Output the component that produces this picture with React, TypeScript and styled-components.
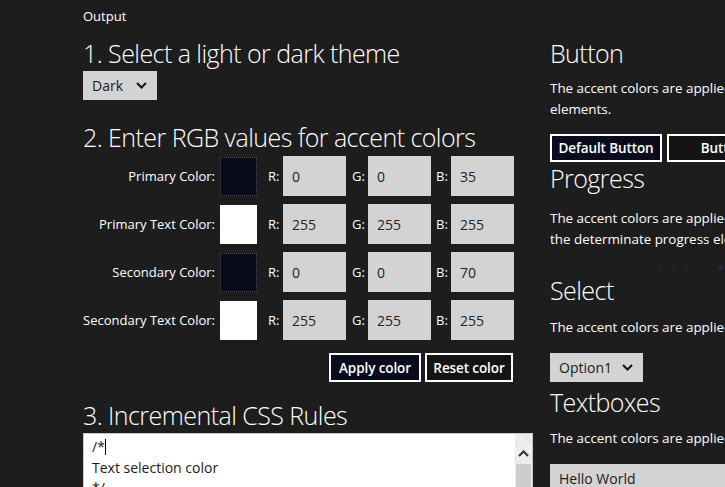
import React from "react";
import styled, { createGlobalStyle } from "styled-components";

const GlobalStyle = createGlobalStyle`
  html, body { margin: 0; padding: 0; background: #1d1d1d; overflow: hidden; }
  body { font-family: "Open Sans", "Noto Sans", sans-serif; color: #fff; }
  * { box-sizing: border-box; }
`;

const Page = styled.div`
  width: 725px;
  height: 487px;
  overflow: hidden;
  padding-left: 83px;
`;

const OutputLabel = styled.div`
  font-size: 13px;
  line-height: 18px;
  padding-top: 7px;
  height: 38px;
`;

const Columns = styled.div`
  display: flex;
  gap: 17px;
  align-items: flex-start;
`;

const LeftCol = styled.div`
  width: 450px;
  flex: none;
  display: flex;
  flex-direction: column;
`;

const RightCol = styled.div`
  width: 520px;
  flex: none;
  display: flex;
  flex-direction: column;
`;

const H2 = styled.h2<{ $mt?: number }>`
  margin: ${(p) => p.$mt ?? 0}px 0 0 0;
  font-weight: 300;
  font-size: 25px;
  line-height: 30px;
  height: 30px;
  letter-spacing: -0.55px;
  white-space: nowrap;
  flex: none;
`;

const Para = styled.p<{ $mt?: number }>`
  margin: ${(p) => p.$mt ?? 0}px 0 0 0;
  font-size: 13.4px;
  line-height: 21px;
  white-space: nowrap;
  flex: none;
`;

const SelectBox = styled.div<{ $w: number; $mt?: number }>`
  width: ${(p) => p.$w}px;
  height: 29px;
  flex: none;
  margin-top: ${(p) => p.$mt ?? 0}px;
  background: #d3d3d3;
  color: #1a1a1a;
  display: flex;
  align-items: center;
  justify-content: space-between;
  padding: 0 10px 0 9px;
  font-size: 14px;
`;

const Chevron = () => (
  <svg width="11" height="7" viewBox="0 0 11 7">
    <path d="M1 1 L5.5 5.5 L10 1" fill="none" stroke="#111" strokeWidth="2" />
  </svg>
);

const ColorGrid = styled.div`
  margin-top: 4px;
  display: grid;
  grid-template-columns: 137px 37px 26px 63px 22px 63px 20px 63px;
  grid-auto-rows: 40px;
  row-gap: 8px;
  align-items: center;
  flex: none;
`;

const RowLabel = styled.div`
  text-align: right;
  font-size: 13px;
  padding-right: 5px;
  white-space: nowrap;
`;

const Swatch = styled.div<{ $c: string; $dark?: boolean }>`
  width: 37px;
  height: 39px;
  background: ${(p) => p.$c};
  border: 1px dotted ${(p) => (p.$dark ? "#555" : "#fff")};
`;

const ChanLabel = styled.div<{ $pl: number }>`
  font-size: 13px;
  padding-left: ${(p) => p.$pl}px;
  white-space: nowrap;
`;

const NumBox = styled.div`
  width: 63px;
  height: 40px;
  background: #d3d3d3;
  color: #222;
  font-size: 14px;
  display: flex;
  align-items: center;
  padding-left: 9px;
`;

const ButtonRow = styled.div<{ $mt: number; $gap: number; $end?: boolean }>`
  display: flex;
  justify-content: ${(p) => (p.$end ? "flex-end" : "flex-start")};
  gap: ${(p) => p.$gap}px;
  width: ${(p) => (p.$end ? "430px" : "auto")};
  margin-top: ${(p) => p.$mt}px;
  flex: none;
`;

const Btn = styled.button<{ $bg: string; $w: number; $h: number }>`
  width: ${(p) => p.$w}px;
  height: ${(p) => p.$h}px;
  background: ${(p) => p.$bg};
  color: #fff;
  border: 2px solid #fff;
  font-family: inherit;
  font-weight: 600;
  font-size: 13.5px;
  letter-spacing: -0.1px;
  padding: 0;
  flex: none;
`;

const CodeBox = styled.div`
  margin-top: 3px;
  width: 450px;
  height: 80px;
  background: #fff;
  color: #1a1a1a;
  display: flex;
  border: 1px solid #c8c8c8;
  flex: none;
`;

const CodeText = styled.div`
  flex: 1;
  padding: 3px 8px;
  font-size: 14px;
  line-height: 20.5px;
  white-space: pre;
`;

const Caret = styled.span`
  display: inline-block;
  width: 1px;
  height: 16px;
  background: #000;
  vertical-align: -3px;
`;

const ScrollBar = styled.div`
  width: 17px;
  background: repeating-linear-gradient(45deg, #e4e4e4 0 1px, #f4f4f4 1px 2px);
  display: flex;
  flex-direction: column;
  align-items: center;
  padding-top: 16px;
  gap: 7px;
`;

const Thumb = styled.div`
  width: 15px;
  height: 40px;
  background: #cdcdcd;
`;

const DotRow = styled.div`
  height: 25px;
  position: relative;
  flex: none;
`;

const Dot = styled.span<{ $x: number; $s: number }>`
  position: absolute;
  left: ${(p) => p.$x}px;
  top: ${(p) => 17 - p.$s / 2}px;
  width: ${(p) => p.$s}px;
  height: ${(p) => p.$s}px;
  background: #23234d;
  border-radius: 50%;
`;

const TextInput = styled.div`
  margin-top: 15px;
  height: 30px;
  background: #d3d3d3;
  color: #1a1a1a;
  font-size: 14px;
  padding: 5px 9px;
  flex: none;
`;

const rows = [
  { label: "Primary Color:", c: "#0b0b1e", dark: true, v: ["0", "0", "35"] },
  { label: "Primary Text Color:", c: "#ffffff", v: ["255", "255", "255"] },
  { label: "Secondary Color:", c: "#0b0b1e", dark: true, v: ["0", "0", "70"] },
  { label: "Secondary Text Color:", c: "#ffffff", v: ["255", "255", "255"] },
];

export default function App() {
  return (
    <>
      <GlobalStyle />
      <Page>
        <OutputLabel>Output</OutputLabel>
        <Columns>
          <LeftCol>
            <H2>1. Select a light or dark theme</H2>
            <SelectBox $w={74} $mt={3}>
              <span>Dark</span>
              <Chevron />
            </SelectBox>
            <H2 $mt={22}>2. Enter RGB values for accent colors</H2>
            <ColorGrid>
              {rows.map((r) => (
                <React.Fragment key={r.label}>
                  <RowLabel>{r.label}</RowLabel>
                  <Swatch $c={r.c} $dark={r.dark} />
                  <ChanLabel $pl={11}>R:</ChanLabel>
                  <NumBox>{r.v[0]}</NumBox>
                  <ChanLabel $pl={6}>G:</ChanLabel>
                  <NumBox>{r.v[1]}</NumBox>
                  <ChanLabel $pl={5}>B:</ChanLabel>
                  <NumBox>{r.v[2]}</NumBox>
                </React.Fragment>
              ))}
            </ColorGrid>
            <ButtonRow $mt={13} $gap={4} $end>
              <Btn $bg="#0b0b1e" $w={92} $h={29}>Apply color</Btn>
              <Btn $bg="#141414" $w={88} $h={29}>Reset color</Btn>
            </ButtonRow>
            <H2 $mt={18}>3. Incremental CSS Rules</H2>
            <CodeBox>
              <CodeText>
                {"/*"}
                <Caret />
                {"\nText selection color\n*/"}
              </CodeText>
              <ScrollBar>
                <svg width="11" height="7" viewBox="0 0 11 7">
                  <path d="M1 6 L5.5 1.5 L10 6" fill="none" stroke="#333" strokeWidth="2" />
                </svg>
                <Thumb />
              </ScrollBar>
            </CodeBox>
          </LeftCol>
          <RightCol>
            <H2>Button</H2>
            <Para $mt={10}>
              The accent colors are applied to the background and border of the button
              <br />
              elements.
            </Para>
            <ButtonRow $mt={14} $gap={5}>
              <Btn $bg="#0b0b1e" $w={112} $h={28}>Default Button</Btn>
              <Btn $bg="#141414" $w={112} $h={28}>Button</Btn>
            </ButtonRow>
            <H2 $mt={1}>Progress</H2>
            <Para $mt={15}>
              The accent colors are applied to the progress bar and background of
              <br />
              the determinate progress element.
            </Para>
            <DotRow>
              <Dot $x={109} $s={3} />
              <Dot $x={121} $s={3} />
              <Dot $x={136} $s={3} />
              <Dot $x={168} $s={5} />
            </DotRow>
            <H2>Select</H2>
            <Para $mt={12}>The accent colors are applied to the select element.</Para>
            <SelectBox $w={93} $mt={15}>
              <span>Option1</span>
              <Chevron />
            </SelectBox>
            <H2 $mt={5}>Textboxes</H2>
            <Para $mt={11}>The accent colors are applied to the textbox element.</Para>
            <TextInput>Hello World</TextInput>
          </RightCol>
        </Columns>
      </Page>
    </>
  );
}
